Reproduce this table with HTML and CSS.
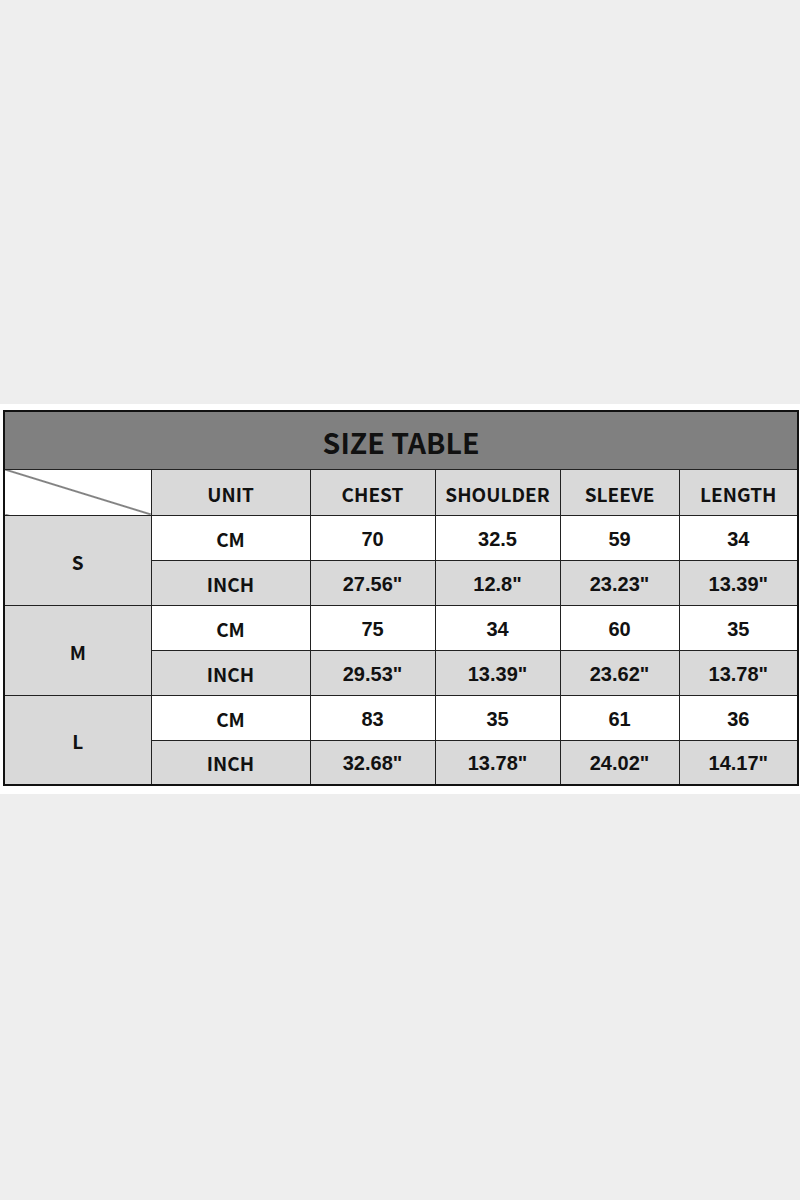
FILE: index.html
```html
<!DOCTYPE html>
<html>
<head>
<meta charset="utf-8">
<link rel="stylesheet" href="styles.css">
</head>
<body>
<div class="sheet">
  <table class="size-table">
    <colgroup>
      <col class="c-size"><col class="c-unit"><col class="c-m"><col class="c-m"><col class="c-s"><col class="c-s">
    </colgroup>
    <tr class="title-row"><th colspan="6" class="title">SIZE TABLE</th></tr>
    <tr class="head-row">
      <th class="diag"></th>
      <th class="hd">UNIT</th>
      <th class="hd">CHEST</th>
      <th class="hd">SHOULDER</th>
      <th class="hd">SLEEVE</th>
      <th class="hd">LENGTH</th>
    </tr>
    <tr class="cm"><td rowspan="2" class="size">S</td><td class="lbl">CM</td><td>70</td><td>32.5</td><td>59</td><td>34</td></tr>
    <tr class="inch"><td class="lbl">INCH</td><td>27.56"</td><td>12.8"</td><td>23.23"</td><td>13.39"</td></tr>
    <tr class="cm"><td rowspan="2" class="size">M</td><td class="lbl">CM</td><td>75</td><td>34</td><td>60</td><td>35</td></tr>
    <tr class="inch"><td class="lbl">INCH</td><td>29.53"</td><td>13.39"</td><td>23.62"</td><td>13.78"</td></tr>
    <tr class="cm"><td rowspan="2" class="size">L</td><td class="lbl">CM</td><td>83</td><td>35</td><td>61</td><td>36</td></tr>
    <tr class="inch"><td class="lbl">INCH</td><td>32.68"</td><td>13.78"</td><td>24.02"</td><td>14.17"</td></tr>
  </table>
</div>
</body>
</html>
```

FILE: styles.css
```css
html, body {
  margin: 0;
  padding: 0;
  background: #eeeeee;
}
body {
  padding-top: 404px;
}
.sheet {
  background: #ffffff;
  padding: 6px 2px 8px 3px;
}
.size-table {
  border-collapse: collapse;
  table-layout: fixed;
  width: 795px;
  border: 2px solid #111;
  font-family: "Liberation Sans", Arial, sans-serif;
  color: #111;
}
.c-size { width: 147px; }
.c-unit { width: 159px; }
.c-m { width: 125px; }
.c-s { width: 119px; }
.size-table th,
.size-table td {
  border: 1px solid #222;
  padding: 0;
  text-align: center;
  vertical-align: middle;
  font-weight: bold;
  font-size: 20px;
  line-height: 1;
}
.size-table td {
  padding-top: 2px;
}
.title-row { height: 58px; }
.size-table .title {
  background: #808080;
  font-family: "Noto Sans CJK SC", "Noto Sans", sans-serif;
  font-size: 28.5px;
  font-weight: bold;
  color: #111;
  padding-top: 4px;
}
.head-row { height: 46px; }
.size-table .hd {
  background: #d9d9d9;
  font-family: "Noto Sans CJK SC", "Noto Sans", sans-serif;
  font-size: 19px;
  padding-top: 3px;
}
.size-table .diag {
  background: linear-gradient(to bottom left, #ffffff calc(50% - 1px), #111 50%, #ffffff calc(50% + 1px));
}
.cm, .inch { height: 45px; }
.cm td { background: #ffffff; }
.inch td { background: #d9d9d9; }
.size-table td.size {
  background: #d9d9d9;
  font-family: "Noto Sans CJK SC", "Noto Sans", sans-serif;
  font-size: 19px;
  padding-top: 2px;
}
.size-table td.lbl {
  font-family: "Noto Sans CJK SC", "Noto Sans", sans-serif;
  font-size: 19px;
  padding-top: 1px;
}
```
